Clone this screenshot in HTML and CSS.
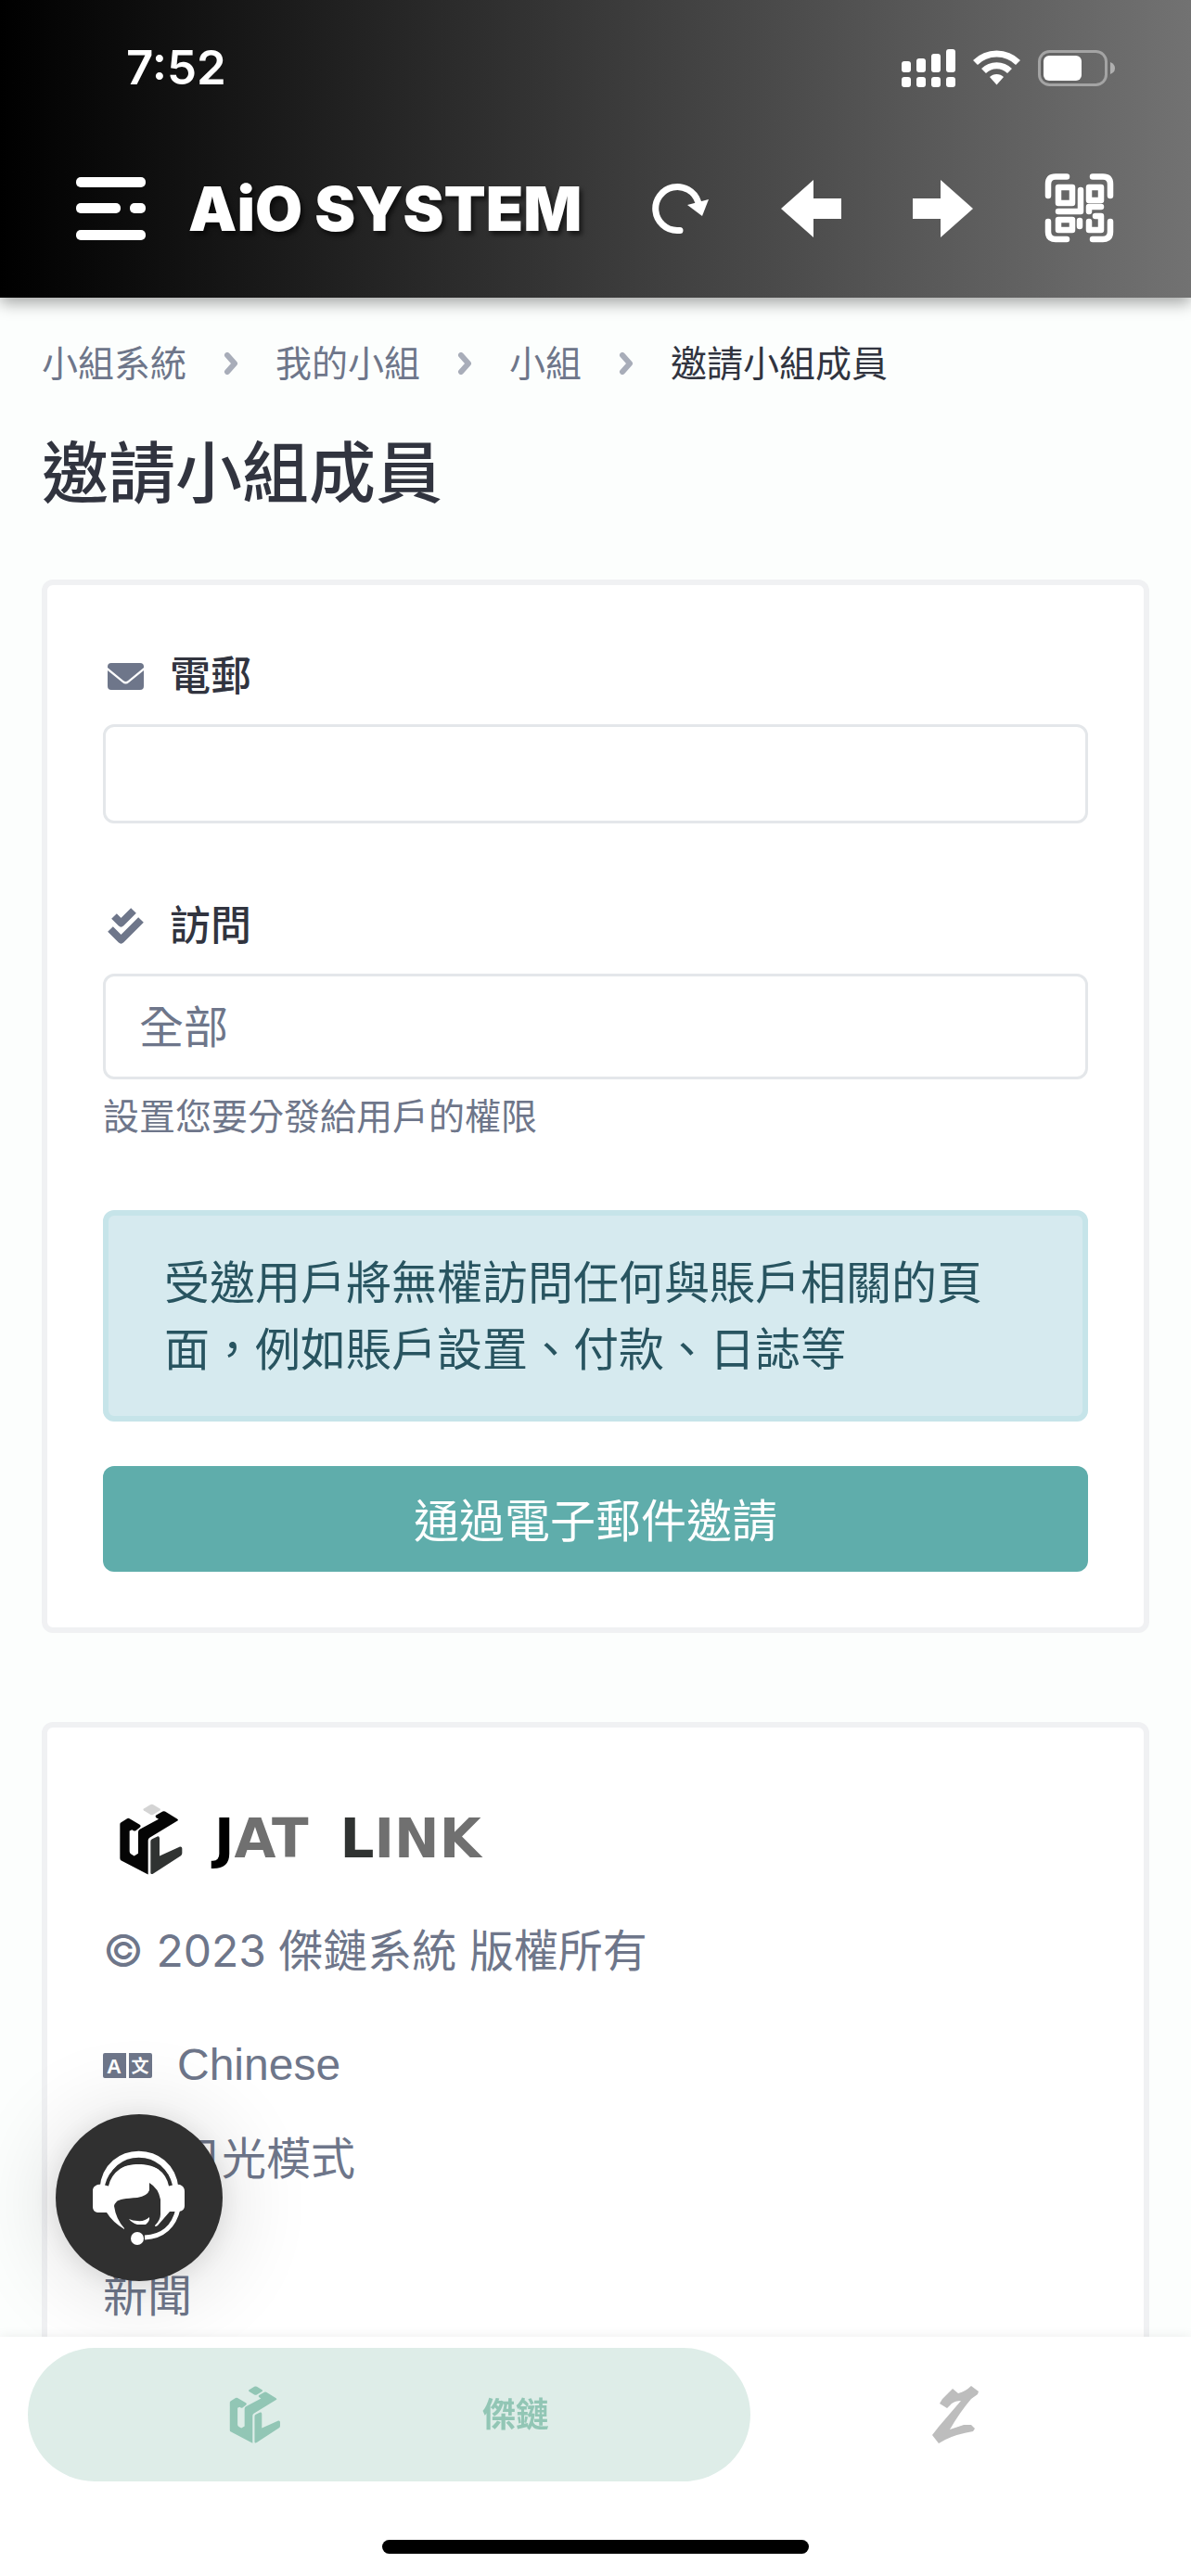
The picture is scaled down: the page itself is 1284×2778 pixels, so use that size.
FILE: index.html
```html
<!DOCTYPE html>
<html lang="zh-Hant">
<head>
    <meta charset="UTF-8">
    <meta name="viewport" content="width=device-width, initial-scale=1.0">
    <title>邀請小組成員</title>
    <link rel="stylesheet" href="styles.css">
</head>
<body>
    <!-- shared logo shape -->
    <svg class="sprite" aria-hidden="true">
        <symbol id="logo-mark" viewBox="58 44 204 230">
            <path class="mark-gem" d="M157 47q5-3 10 0l21 13q4 3 0 6l-21 13q-5 3-10 0l-21-13q-4-3 0-6z"/>
            <path class="mark-main" d="M59 110q0-4 4-6l19-12q4-2 8 0l33 20q6 4 1 8l-14 11q-5 3-12-3l-8 4v66q0 6 5 9l10 6 13-8v-69q0-6 5-9l61-33-8-5q-5-4 0-8l21-12q4-2 8 0l39 24q6 4 0 7l-89 54q-5 3-5 9v110l-88-46q-3-2-3-7z"/>
            <path class="mark-side" d="M158 166q0-6 5-8l17-8q6-2 7 5v58l66-30q7-1 7 6v15q0 5-4 8l-88 57q-9 6-10-1z"/>
        </symbol>
    </svg>

    <header class="app-header">
        <div class="status-bar">
            <span class="time">7:52</span>
            <div class="status-icons">
                <svg width="58" height="41" viewBox="0 0 58 41" fill="#fff">
                    <rect x="0" y="13" width="10" height="12" rx="3"/>
                    <rect x="16" y="10" width="10" height="15" rx="3"/>
                    <rect x="32" y="5" width="10" height="20" rx="3"/>
                    <rect x="48" y="0" width="10" height="25" rx="3"/>
                    <rect x="0" y="30" width="10" height="11" rx="3"/>
                    <rect x="16" y="30" width="10" height="11" rx="3"/>
                    <rect x="32" y="30" width="10" height="11" rx="3"/>
                    <rect x="48" y="30" width="10" height="11" rx="3"/>
                </svg>
                <svg width="51" height="38" viewBox="0 0 51 38">
                    <g fill="none" stroke="#fff" stroke-width="7">
                        <path d="M2.500 13.500a32.500 32.500 0 0 1 46 0"/>
                        <path d="M11.500 22.500a19.800 19.800 0 0 1 28 0"/>
                    </g>
                    <path fill="#fff" d="M18 29a10.600 10.600 0 0 1 15 0l-7.500 8.500z"/>
                </svg>
                <svg width="83" height="39" viewBox="0 0 83 39">
                    <rect x="1.500" y="1.500" width="72" height="36" rx="11" fill="none" stroke="#a4a4a4" stroke-width="3"/>
                    <rect x="6" y="6" width="41" height="27" rx="6" fill="#fff"/>
                    <path d="M78 13q5 2 5 6.500t-5 6.500z" fill="#b0b0b0"/>
                </svg>
            </div>
        </div>

        <div class="toolbar">
            <button type="button" class="icon-btn" aria-label="Menu">
                <svg width="75" height="68" viewBox="0 0 75 68" fill="#fff">
                    <rect width="75" height="11" rx="5"/>
                    <rect y="28" width="48" height="11" rx="5"/>
                    <rect x="58" y="28" width="17" height="11" rx="5"/>
                    <rect y="57" width="75" height="11" rx="5"/>
                </svg>
            </button>
            <span class="brand">AiO SYSTEM</span>
            <div class="actions">
                <button type="button" class="icon-btn" aria-label="Reload">
                    <svg width="62" height="56" viewBox="0 0 62 56">
                        <path d="M30 51.500h-3a23.500 23.500 0 1 1 22.500-31" fill="none" stroke="#fff" stroke-width="7" stroke-linecap="round"/>
                        <path d="M38 24l23-6-7 18z" fill="#fff"/>
                    </svg>
                </button>
                <button type="button" class="icon-btn" aria-label="Back">
                    <svg width="65" height="62" viewBox="0 0 65 62"><path d="M0 31L35 0v20h30v22H35v20z" fill="#fff"/></svg>
                </button>
                <button type="button" class="icon-btn" aria-label="Forward">
                    <svg width="65" height="62" viewBox="0 0 65 62"><path d="M65 31L30 0v20H0v22h30v20z" fill="#fff"/></svg>
                </button>
                <button type="button" class="icon-btn" aria-label="QR code">
                    <svg width="75" height="75" viewBox="0 0 75 75" fill="none" stroke="#fff" stroke-width="6.500" stroke-linecap="round" stroke-linejoin="round">
                        <path d="M24 3.500H12q-8 0-8 8V24M52 3.500h11q8 0 8 8V24M4 52v11q0 8 8 8h12M71 52v11q0 8-8 8H52"/>
                        <rect x="15" y="15" width="15" height="17"/>
                        <rect x="48" y="15" width="13" height="14"/>
                        <rect x="15" y="50" width="15" height="11"/>
                        <path d="M39 18v23H15M38 51v6M61 36H48v5M55 46h6v15H48V52"/>
                    </svg>
                </button>
            </div>
        </div>
    </header>

    <main class="page">
        <nav class="breadcrumb" aria-label="breadcrumb">
            <a href="#">小組系統</a>
            <svg class="chevron" viewBox="0 0 16 24"><path d="M4 3l8 9-8 9"/></svg>
            <a href="#">我的小組</a>
            <svg class="chevron" viewBox="0 0 16 24"><path d="M4 3l8 9-8 9"/></svg>
            <a href="#">小組</a>
            <svg class="chevron" viewBox="0 0 16 24"><path d="M4 3l8 9-8 9"/></svg>
            <span class="current">邀請小組成員</span>
        </nav>

        <h1>邀請小組成員</h1>

        <form class="card">
            <div class="form-group">
                <label for="email">
                    <svg class="label-icon" viewBox="0 0 39 42" fill="#6e768a">
                        <path d="M4 7h31q4 0 4 4v1L22 26q-2.500 2-5 0L0 12v-1q0-4 4-4z"/>
                        <path d="M0 15l16 13q3.500 3 7 0l16-13v17q0 4-4 4H4q-4 0-4-4z"/>
                    </svg>
                    電郵
                </label>
                <input type="email" id="email" name="email">
            </div>
            <div class="form-group">
                <label for="access">
                    <svg class="label-icon" viewBox="0 0 39 42" fill="none" stroke="#6e768a" stroke-width="8" stroke-linejoin="round">
                        <path d="M7 11l7.500 7.500L28 5" />
                        <path d="M3 25l11.500 11.500L36 15" />
                    </svg>
                    訪問
                </label>
                <select id="access" name="access">
                    <option>全部</option>
                </select>
                <small>設置您要分發給用戶的權限</small>
            </div>
            <div class="alert">受邀用戶將無權訪問任何與賬戶相關的頁面，例如賬戶設置、付款、日誌等</div>
            <button type="submit" class="btn">通過電子郵件邀請</button>
        </form>

        <footer class="card">
            <a href="#" class="footer-logo">
                <svg class="footer-mark"><use href="#logo-mark"/></svg>
                <span class="word"><b>J</b>AT</span>
                <span class="word"><i>L</i>INK</span>
            </a>
            <p class="copyright">© 2023 傑鏈系統 版權所有</p>
            <a href="#" class="footer-link">
                <svg class="lang-icon" viewBox="0 0 53 27">
                    <path d="M2 0h23v27H2q-2 0-2-2V2q0-2 2-2zM28 0h23q2 0 2 2v23q0 2-2 2H28z" fill="#6e768a"/>
                    <text x="12" y="22" class="lang-a">A</text>
                    <text x="40" y="21" class="lang-zh">文</text>
                </svg>
                Chinese
            </a>
            <a href="#" class="footer-link">
                <svg class="lang-icon" viewBox="0 0 53 27"><circle cx="24" cy="13" r="10" fill="#6e768a"/></svg>
                日光模式
            </a>
            <a href="#" class="footer-link footer-news">新聞</a>
        </footer>
    </main>

    <button type="button" class="support-btn" aria-label="Support">
        <svg viewBox="0 0 180 180">
            <path d="M51 80C55 31 124 31 129 80" fill="none" stroke="#fff" stroke-width="7"/>
            <path fill="#fff" d="M45 76l9-1C62 47 117 47 124 75l10 1q5 2 5 7v16q0 5-6 6h-10l-13 15q-3 2-3 0 6-6 6-12V92q-2-12-12-18v8q-2 6-13 8-19 1-22 4-3 3-3 5 2 14 11 24v1Q61 116 55 106H45q-5-1-5-6V82q0-4 5-6z"/>
            <path d="M55 77C63 42 117 42 124 77" fill="none" stroke="#303030" stroke-width="4"/>
            <path d="M79 113q4 2 9 2 8 1 13-4 1 4-4 8H88q-6-2-9-6z" fill="#fff"/>
            <path d="M132 102C128 120 116 132 96 133" fill="none" stroke="#fff" stroke-width="5"/>
            <circle cx="88" cy="134" r="7" fill="#fff"/>
        </svg>
    </button>

    <nav class="bottom-nav">
        <div class="tabs">
            <a href="#" class="tab active">
                <svg class="tab-mark"><use href="#logo-mark"/></svg>
                <span>傑鏈</span>
            </a>
            <a href="#" class="tab" aria-label="Z">
                <svg width="52" height="62" viewBox="0 0 52 62" fill="#bdbdbd">
                    <path d="M22 3l6 5q8-2 14-8l8 6-1 3-7 5q-12 14-23 33l15-5h8l4 4-2 3q-18 3-30 9l-7 4-7-9 7-9 24-28q-6 0-10 3l-5 5-8-5 3-5z"/>
                </svg>
            </a>
        </div>
        <div class="home-indicator"></div>
    </nav>
</body>
</html>
```
FILE: styles.css
```css
* {
    box-sizing: border-box;
}

body {
    margin: 0;
    background-color: #fcfefd;
    color: #6e768a;
    font-family: Inter, "Noto Sans CJK TC", sans-serif;
    font-size: 49px;
    line-height: 72px;
}

a {
    color: inherit;
    text-decoration: none;
}

button {
    border: none;
    cursor: pointer;
    font-family: inherit;
}

svg {
    display: block;
    flex-shrink: 0;
}

.sprite {
    position: absolute;
    width: 0;
    height: 0;
}

/* header */
.app-header {
    position: sticky;
    top: 0;
    z-index: 2;
    background: linear-gradient(to right, #000, #727272);
    box-shadow: 0 6px 16px rgba(0, 0, 0, 0.35);
    color: #fff;
}

.status-bar {
    display: flex;
    justify-content: space-between;
    align-items: center;
    height: 132px;
    padding: 14px 82px 0 136px;
}

.time {
    font-size: 51px;
    font-weight: 600;
}

.status-icons {
    display: flex;
    align-items: center;
    gap: 19px;
}

.toolbar {
    display: flex;
    align-items: center;
    height: 189px;
    padding: 0 83px 4px 82px;
}

.icon-btn {
    padding: 0;
    background: none;
}

.brand {
    margin-left: 46px;
    font-size: 66px;
    font-weight: 900;
    white-space: nowrap;
    text-shadow: 3px 4px 5px rgba(0, 0, 0, 0.6);
}

.actions {
    display: flex;
    align-items: center;
    gap: 77px;
    margin-left: auto;
}

/* page */
.page {
    padding: 41px 45px 24px;
}

.breadcrumb {
    display: flex;
    align-items: center;
    gap: 40px;
    font-size: 39px;
    line-height: 60px;
}

.breadcrumb .current {
    color: #31343f;
}

.chevron {
    width: 16px;
    height: 24px;
    fill: none;
    stroke: #a8adb9;
    stroke-width: 6;
    stroke-linecap: round;
    stroke-linejoin: round;
}

h1 {
    margin: 34px 0 61px;
    color: #31343f;
    font-size: 72px;
    font-weight: 500;
    line-height: 108px;
}

.card {
    padding: 60px;
    background-color: #fff;
    border: 6px solid #f0f1f3;
    border-radius: 12px;
}

.form-group {
    margin-bottom: 72px;
}

label {
    display: flex;
    align-items: center;
    gap: 28px;
    margin-bottom: 14px;
    padding-left: 5px;
    color: #31343f;
    font-size: 44px;
    font-weight: 500;
    line-height: 76px;
}

.label-icon {
    width: 39px;
    height: 42px;
}

input,
select {
    display: block;
    width: 100%;
    height: 107px;
    padding: 0 36px;
    appearance: none;
    background-color: #fff;
    border: 3px solid #e4e7ea;
    border-radius: 12px;
    color: #6e768a;
    font-family: inherit;
    font-size: 48px;
}

select {
    height: 114px;
}

small {
    display: block;
    margin-top: 11px;
    font-size: 39px;
    line-height: 58px;
}

.alert {
    margin-bottom: 48px;
    padding: 37px 60px 35px;
    background-color: #d6eaef;
    border: 6px solid #c6e4e9;
    border-radius: 12px;
    color: #285460;
}

.btn {
    display: block;
    width: 100%;
    height: 114px;
    padding: 0 0 4px;
    background-color: #5fadab;
    border-radius: 12px;
    color: #fff;
    font-size: 49px;
}

/* footer */
footer.card {
    margin-top: 96px;
}

.footer-logo {
    display: flex;
    align-items: center;
    gap: 34px;
    height: 120px;
    padding-left: 18px;
    color: #707070;
    font-family: "DejaVu Sans", sans-serif;
    font-size: 58px;
    font-weight: bold;
}

.footer-mark {
    width: 68px;
    height: 77px;
}

.mark-gem {
    fill: var(--mark-gem, #d4d4d4);
}

.mark-main {
    fill: var(--mark-main, #050505);
}

.mark-side {
    fill: var(--mark-side, #303332);
}

.word b {
    color: #000;
}

.word i {
    color: #303332;
    font-style: normal;
}

.copyright {
    margin: 25px 0 51px;
    font-size: 48px;
}

.footer-link {
    display: flex;
    align-items: center;
    gap: 27px;
    margin-bottom: 30px;
    font-family: "Liberation Sans", "Noto Sans CJK TC", sans-serif;
    font-size: 48px;
}

.footer-news {
    margin: 76px 0 0;
}

.lang-icon {
    width: 53px;
    height: 27px;
}

.lang-icon text {
    fill: #fff;
    font-weight: bold;
    text-anchor: middle;
}

.lang-a {
    font-size: 22px;
}

.lang-zh {
    font-size: 19px;
}

/* floating support button */
.support-btn {
    position: fixed;
    bottom: 318px;
    left: 60px;
    width: 180px;
    height: 180px;
    padding: 0;
    background-color: #303030;
    border-radius: 50%;
    box-shadow: 0 6px 100px rgba(0, 0, 0, 0.16), 0 3px 30px rgba(0, 0, 0, 0.1);
}

/* bottom navigation */
.bottom-nav {
    position: fixed;
    right: 0;
    bottom: 0;
    left: 0;
    padding: 12px 30px 24px;
    background-color: #fff;
    box-shadow: 0 0 12px rgba(0, 0, 0, 0.08);
}

.tabs {
    display: grid;
    grid-template-columns: 7fr 4fr;
}

.tab {
    display: flex;
    justify-content: space-evenly;
    align-items: center;
    height: 144px;
    border-radius: 72px;
    color: #92c6b5;
    font-size: 36px;
    font-weight: bold;
}

.tab.active {
    background-color: #deede8;
}

.tab-mark {
    --mark-gem: #92c6b5;
    --mark-main: #92c6b5;
    --mark-side: #92c6b5;
    width: 56px;
    height: 62px;
}

.home-indicator {
    width: 460px;
    height: 15px;
    margin: 63px auto 0;
    background-color: #000;
    border-radius: 8px;
}
```
